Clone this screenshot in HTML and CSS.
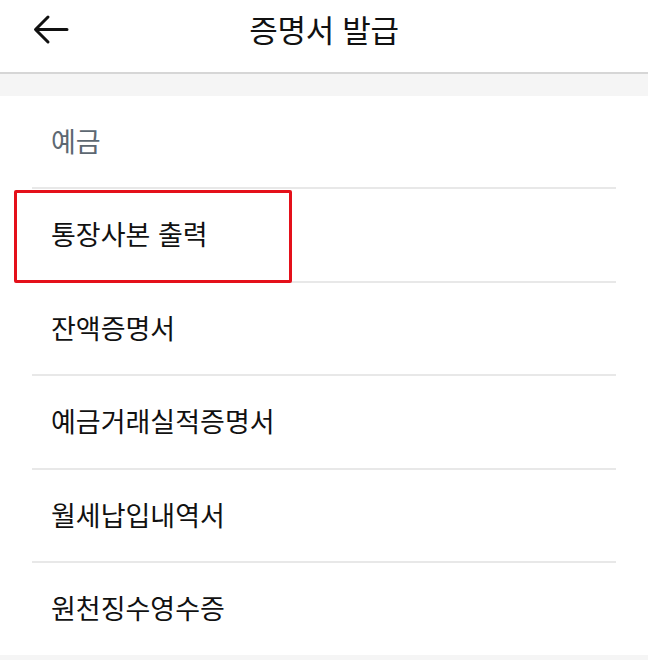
FILE: index.html
```html
<!DOCTYPE html>
<html lang="ko">
<head>
  <meta charset="UTF-8">
  <meta name="viewport" content="width=device-width, initial-scale=1.0">
  <title>증명서 발급</title>
  <link rel="stylesheet" href="styles.css">
</head>
<body>
  <header class="topbar">
    <button class="back" aria-label="뒤로">
      <svg width="38" height="32" viewBox="0 0 38 32">
        <path d="M36 15.5H5M17 3L4.5 15.5 17 28" fill="none" stroke="#111" stroke-width="3" stroke-linecap="round" stroke-linejoin="round"/>
      </svg>
    </button>
    <h1 class="title">증명서 발급</h1>
  </header>
  <div class="gap"></div>
  <section class="menu">
    <div class="group-label">예금</div>
    <ul class="list">
      <li class="item selected"><span>통장사본 출력</span></li>
      <li class="item"><span>잔액증명서</span></li>
      <li class="item"><span>예금거래실적증명서</span></li>
      <li class="item"><span>월세납입내역서</span></li>
      <li class="item"><span>원천징수영수증</span></li>
    </ul>
  </section>
  <div class="gap"></div>
</body>
</html>
```

FILE: styles.css
```css
body {
  margin: 0;
  background: #f5f5f5;
  color: #111;
  font-family: "Noto Sans CJK KR", "Noto Sans", sans-serif;
}
.topbar {
  height: 72px;
  background: #fff;
  border-bottom: 2px solid #d6d6d6;
  display: flex;
  align-items: center;
  justify-content: center;
  position: relative;
}
.back {
  position: absolute;
  left: 31px;
  top: 14px;
  padding: 0;
  border: 0;
  background: none;
}
.back svg { display: block; }
.title {
  margin: 0;
  font-size: 31px;
  font-weight: 400;
  letter-spacing: -0.3px;
  padding-bottom: 16px;
}
.gap { height: 22px; }
.menu {
  background: #fff;
  padding: 0 32px;
}
.group-label {
  height: 91px;
  display: flex;
  align-items: center;
  padding-left: 19px;
  font-size: 27px;
  color: #5d6872;
  padding-bottom: 2px;
  box-sizing: border-box;
}
.list {
  list-style: none;
  margin: 0;
  padding: 0;
}
.item {
  height: 91.5px;
  border-top: 2px solid #e8e8e8;
  display: flex;
  align-items: center;
  padding-left: 19px;
  font-size: 27px;
}
.item span { margin-top: -2px; }
.selected { position: relative; }
.selected::after {
  content: "";
  position: absolute;
  z-index: 1;
  left: -18px;
  top: 1px;
  width: 272px;
  height: 87px;
  border: 3px solid #e4101a;
  border-radius: 2px;
}
```
